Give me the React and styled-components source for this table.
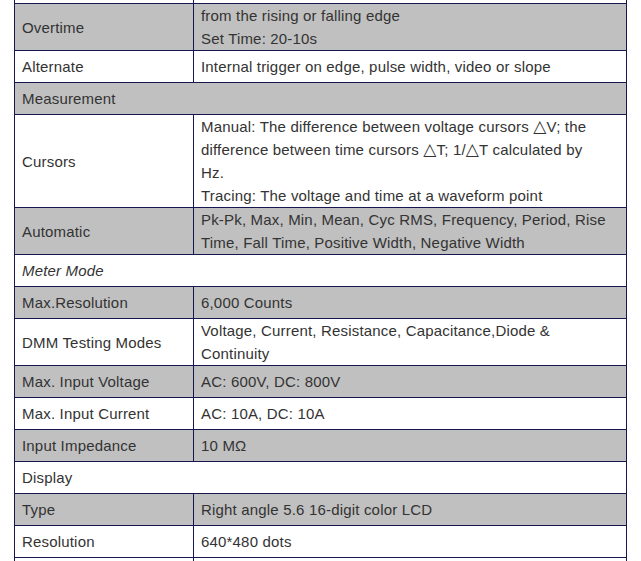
import React from "react";
import styled, { createGlobalStyle } from "styled-components";

const GlobalStyle = createGlobalStyle`
    html, body {
        margin: 0;
        padding: 0;
        background: #ffffff;
    }
`;

const borderColor = "#17174f";
const greyFill = "#c0c0c0";
const textColor = "#333333";

const Page = styled.div`
    padding-left: 14px;
    width: 641px;
    height: 561px;
    overflow: hidden;
    box-sizing: border-box;
`;

const SpecTable = styled.table`
    border-collapse: collapse;
    width: 613px;
    table-layout: fixed;
    font-family: "Liberation Sans", Arial, "DejaVu Sans", sans-serif;
    font-size: 15px;
    letter-spacing: 0.18px;
    line-height: 23px;
    color: ${textColor};
`;

const Row = styled.tr`
    background: ${(p) => (p.$grey ? greyFill : "#ffffff")};
`;

const Cell = styled.td`
    border: 1px solid ${borderColor};
    height: 31px;
    padding: 0 0 0 7px;
    vertical-align: middle;
    white-space: nowrap;
    font-style: ${(p) => (p.$italic ? "italic" : "normal")};
`;

const EdgeCell = styled.td`
    border: 1px solid ${borderColor};
    border-top: none;
    height: 3px;
    padding: 0;
`;

const Delta = styled.span`
    font-family: "DejaVu Sans", sans-serif;
    font-size: 17px;
    line-height: 0;
`;

const rows = [
    { label: "Overtime", value: ["from the rising or falling edge", "Set Time: 20-10s"], grey: true },
    { label: "Alternate", value: ["Internal trigger on edge, pulse width, video or slope"] },
    { section: "Measurement", grey: true },
    {
        label: "Cursors",
        value: [
            <>Manual: The difference between voltage cursors <Delta>△</Delta>V; the</>,
            <>difference between time cursors <Delta>△</Delta>T; 1/<Delta>△</Delta>T calculated by</>,
            "Hz.",
            "Tracing: The voltage and time at a waveform point",
        ],
    },
    {
        label: "Automatic",
        value: [
            "Pk-Pk, Max, Min, Mean, Cyc RMS, Frequency, Period, Rise",
            "Time, Fall Time, Positive Width, Negative Width",
        ],
        grey: true,
    },
    { section: "Meter Mode", italic: true },
    { label: "Max.Resolution", value: ["6,000 Counts"], grey: true },
    { label: "DMM Testing Modes", value: ["Voltage, Current, Resistance, Capacitance,Diode &", "Continuity"] },
    { label: "Max. Input Voltage", value: ["AC: 600V, DC: 800V"], grey: true },
    { label: "Max. Input Current", value: ["AC: 10A, DC: 10A"] },
    { label: "Input Impedance", value: ["10 MΩ"], grey: true },
    { section: "Display" },
    { label: "Type", value: ["Right angle 5.6 16-digit color LCD"], grey: true },
    { label: "Resolution", value: ["640*480 dots"] },
];

export default function App() {
    return (
        <>
            <GlobalStyle />
            <Page>
                <SpecTable>
                    <colgroup>
                        <col style={{ width: "179px" }} />
                        <col />
                    </colgroup>
                    <tbody>
                        <Row>
                            <EdgeCell />
                            <EdgeCell />
                        </Row>
                        {rows.map((r, i) =>
                            r.section ? (
                                <Row key={i} $grey={r.grey}>
                                    <Cell colSpan={2} $italic={r.italic}>
                                        {r.section}
                                    </Cell>
                                </Row>
                            ) : (
                                <Row key={i} $grey={r.grey}>
                                    <Cell>{r.label}</Cell>
                                    <Cell>
                                        {r.value.map((line, j) => (
                                            <div key={j}>{line}</div>
                                        ))}
                                    </Cell>
                                </Row>
                            )
                        )}
                        <Row>
                            <Cell>&nbsp;</Cell>
                            <Cell>&nbsp;</Cell>
                        </Row>
                    </tbody>
                </SpecTable>
            </Page>
        </>
    );
}
